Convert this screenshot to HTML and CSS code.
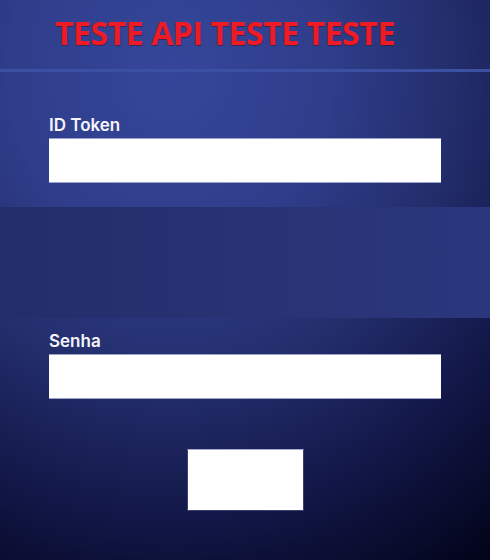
FILE: index.html
```html
<!DOCTYPE html>
<html lang="pt">
<head>
<meta charset="utf-8">
<link rel="stylesheet" href="styles.css">
</head>
<body>
<div class="page">
  <header class="header">
    <h1 class="title">TESTE API TESTE TESTE</h1>
  </header>
  <div class="rule"></div>
  <main class="form">
    <div class="field field-token">
      <label class="label">ID Token</label>
      <div class="input"></div>
    </div>
    <div class="band"></div>
    <div class="field field-senha">
      <label class="label">Senha</label>
      <div class="input"></div>
    </div>
    <div class="actions">
      <div class="button"></div>
    </div>
  </main>
</div>
</body>
</html>
```

FILE: styles.css
```css
* { box-sizing: border-box; }
html, body { margin: 0; padding: 0; }
body {
  width: 490px;
  height: 560px;
  overflow: hidden;
  font-family: "Inter", "Open Sans", sans-serif;
}
.page {
  width: 490px;
  height: 560px;
  background:
    radial-gradient(ellipse 540px 600px at 170px 70px, #35469a 0%, #2f3d8a 30%, #232e6c 52%, #111645 76%, #02041a 100%);
  display: flex;
  flex-direction: column;
}
.header {
  height: 69px;
  display: flex;
  align-items: center;
  padding-left: 55px;
}
.title {
  margin: 0;
  font-family: "Open Sans", sans-serif;
  font-weight: 700;
  font-size: 32px;
  letter-spacing: -0.45px;
  color: #ee1a26;
  text-shadow: 1px 1px 0 rgba(60, 20, 40, 0.6);
  line-height: 1;
  margin-top: -3px;
}
.rule {
  height: 3px;
  background: #3b4fa3;
}
.form {
  display: flex;
  flex-direction: column;
}
.field {
  padding: 0 49px;
  display: flex;
  flex-direction: column;
}
.field-token { padding-top: 43px; }
.field-senha { padding-top: 13px; }
.label {
  color: #f4f4fa;
  font-size: 17px;
  font-weight: 600;
  line-height: 20px;
  height: 23px;
}
.input {
  height: 45px;
  background: #fff;
  border-top: 1px solid #9ea3cc;
  border-bottom: 1px solid #9ea3cc;
}
.band {
  margin-top: 24px;
  height: 111px;
  background: linear-gradient(to right, #232d6b 0%, #283374 50%, #2b377d 100%);
}
.actions {
  display: flex;
  justify-content: center;
  padding-top: 50px;
}
.button {
  width: 117px;
  height: 62px;
  background: #fff;
  border: 1px solid #3c4170;
  border-top-color: #a9acd0;
}
```
